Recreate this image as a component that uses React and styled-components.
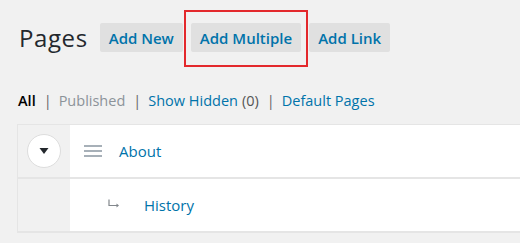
import React from 'react';
import styled, { createGlobalStyle } from 'styled-components';

const GlobalStyle = createGlobalStyle`
  html, body {
    margin: 0;
    padding: 0;
    background: #f1f1f1;
    font-family: "Open Sans", "Noto Sans", sans-serif;
    overflow: hidden;
  }
`;

const Page = styled.div`
  width: 520px;
  height: 243px;
  padding-left: 18px;
  box-sizing: border-box;
`;

const Header = styled.div`
  display: flex;
  align-items: center;
  height: 75px;
  gap: 8px;
`;

const Title = styled.h1`
  margin: 0 4px 0 1px;
  font-size: 24px;
  font-weight: 400;
  letter-spacing: 0.6px;
  color: #23282d;
  line-height: 1;
`;

const ActionWrap = styled.div`
  position: relative;
  display: flex;
`;

const Highlight = styled.span`
  position: absolute;
  left: -7px;
  right: -7px;
  top: -13px;
  bottom: -15px;
  border: 2px solid #e3282c;
  pointer-events: none;
`;

const ActionButton = styled.a`
  display: inline-flex;
  align-items: center;
  height: 29px;
  padding: 0 9px;
  background: #e0e0e0;
  border-radius: 2px;
  color: #0073aa;
  font-size: 15px;
  font-weight: 600;
  text-decoration: none;
  cursor: pointer;
`;

const Filters = styled.ul`
  display: flex;
  align-items: center;
  margin: 12px 0 0;
  padding: 0;
  list-style: none;
  font-size: 14.5px;
  height: 26px;
`;

const FilterItem = styled.li`
  color: #555;
  &:not(:last-child)::after {
    content: '|';
    margin: 0 7px 0 8px;
    color: #666;
  }
`;

const FilterLink = styled.a`
  color: ${p => (p.$current ? '#000' : p.$muted ? '#8c9399' : '#0073aa')};
  font-weight: ${p => (p.$current ? 600 : 400)};
  text-decoration: none;
`;

const Count = styled.span`
  color: #555;
  margin-left: 4px;
`;

const Table = styled.div`
  margin: 11px 0 0 -1px;
  width: 560px;
  border-top: 1px solid #e5e5e5;
  border-left: 1px solid #e5e5e5;
`;

const Row = styled.div`
  display: grid;
  grid-template-columns: 52px 1fr;
  height: 52px;
  border-bottom: 2px solid #e5e5e5;
`;

const Gutter = styled.div`
  background: #f1f1f1;
  display: flex;
  align-items: center;
  justify-content: center;
`;

const Toggle = styled.button`
  width: 34px;
  height: 34px;
  margin-right: 1px;
  border-radius: 50%;
  border: 1px solid #ddd;
  background: #fff;
  padding: 0;
  display: flex;
  align-items: center;
  justify-content: center;
  cursor: pointer;
`;

const Cell = styled.div`
  background: #fff;
  display: flex;
  align-items: center;
  padding-left: ${p => p.$indent}px;
`;

const Handle = styled.span`
  display: inline-flex;
  flex-direction: column;
  gap: 3px;
  width: 18px;
  margin-right: 17px;
  span {
    display: block;
    height: 2px;
    background: #a7b0b8;
  }
`;

const ChildArrow = styled.span`
  display: inline-flex;
  margin-right: 24px;
  margin-top: -4px;
`;

const PageLink = styled.a`
  color: #0073aa;
  font-size: 15px;
  text-decoration: none;
`;

const pages = [
  { title: 'About', child: false },
  { title: 'History', child: true },
];

export default function App() {
  return (
    <>
      <GlobalStyle />
      <Page>
        <Header>
          <Title>Pages</Title>
          <ActionButton>Add New</ActionButton>
          <ActionWrap>
            <ActionButton>Add Multiple</ActionButton>
            <Highlight />
          </ActionWrap>
          <ActionButton>Add Link</ActionButton>
        </Header>
        <Filters>
          <FilterItem><FilterLink $current>All</FilterLink></FilterItem>
          <FilterItem><FilterLink $muted>Published</FilterLink></FilterItem>
          <FilterItem><FilterLink>Show Hidden</FilterLink><Count>(0)</Count></FilterItem>
          <FilterItem><FilterLink>Default Pages</FilterLink></FilterItem>
        </Filters>
        <Table>
          {pages.map(page => (
            <Row key={page.title}>
              <Gutter>
                {!page.child && (
                  <Toggle aria-label="Toggle">
                    <svg width="10" height="8" viewBox="0 0 10 8">
                      <path d="M0.5 1h9L5 7z" fill="#23282d" />
                    </svg>
                  </Toggle>
                )}
              </Gutter>
              <Cell $indent={page.child ? 38 : 14}>
                {page.child ? (
                  <ChildArrow>
                    <svg width="12" height="9" viewBox="0 0 12 9">
                      <path d="M1 0.5v6h9" stroke="#82878c" strokeWidth="1.2" fill="none" />
                      <path d="M8.5 4.5l2.5 2-2.5 2z" fill="#82878c" />
                    </svg>
                  </ChildArrow>
                ) : (
                  <Handle><span /><span /><span /></Handle>
                )}
                <PageLink>{page.title}</PageLink>
              </Cell>
            </Row>
          ))}
        </Table>
      </Page>
    </>
  );
}
